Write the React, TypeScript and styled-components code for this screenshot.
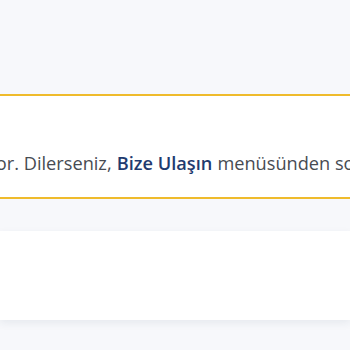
import React from 'react'
import styled, { createGlobalStyle } from 'styled-components'

const GlobalStyle = createGlobalStyle`
  html, body {
    margin: 0;
    padding: 0;
    background: #f7f8fb;
    font-family: 'Open Sans', 'Liberation Sans', sans-serif;
    overflow: hidden;
  }
`

const Page = styled.div`
  width: 350px;
  height: 350px;
  padding-top: 94px;
  box-sizing: border-box;
  overflow: hidden;
`

const Alert = styled.div`
  background: #ffffff;
  border-top: 2px solid #efbb2c;
  border-bottom: 2px solid #efbb2c;
  height: 105px;
  box-sizing: border-box;
  padding-top: 56px;
`

const Message = styled.p`
  display: flex;
  align-items: baseline;
  margin: 0;
  white-space: nowrap;
  font-size: 18.2px;
  line-height: 22px;
  color: #474b52;
`

// the start of the sentence runs off the left edge of the viewport
const Lead = styled.span<{ $w: number }>`
  display: flex;
  justify-content: flex-end;
  flex: 0 0 ${(p) => p.$w}px;
  width: ${(p) => p.$w}px;
  min-width: 0;
`

const Strong = styled.a`
  color: #1f3b6f;
  font-weight: 600;
  text-decoration: none;
  margin: 0 0.28em;
`

const Gap = styled.div`
  height: 32px;
`

const Card = styled.div`
  background: #ffffff;
  height: 89px;
  box-shadow: 0 3px 8px rgba(40, 60, 90, 0.08);
`

export default function App() {
  return (
    <Page>
      <GlobalStyle />
      <Alert>
        <Message>
          <Lead $w={19}>
            <span>Aradığınız kriterlere uygun sonuç bulunmuyor.</span>
          </Lead>
          <span>&nbsp;Dilerseniz,</span>
          <Strong href="#">Bize Ulaşın</Strong>
          <span>menüsünden sorunuzu iletebilirsiniz.</span>
        </Message>
      </Alert>
      <Gap />
      <Card />
    </Page>
  )
}
